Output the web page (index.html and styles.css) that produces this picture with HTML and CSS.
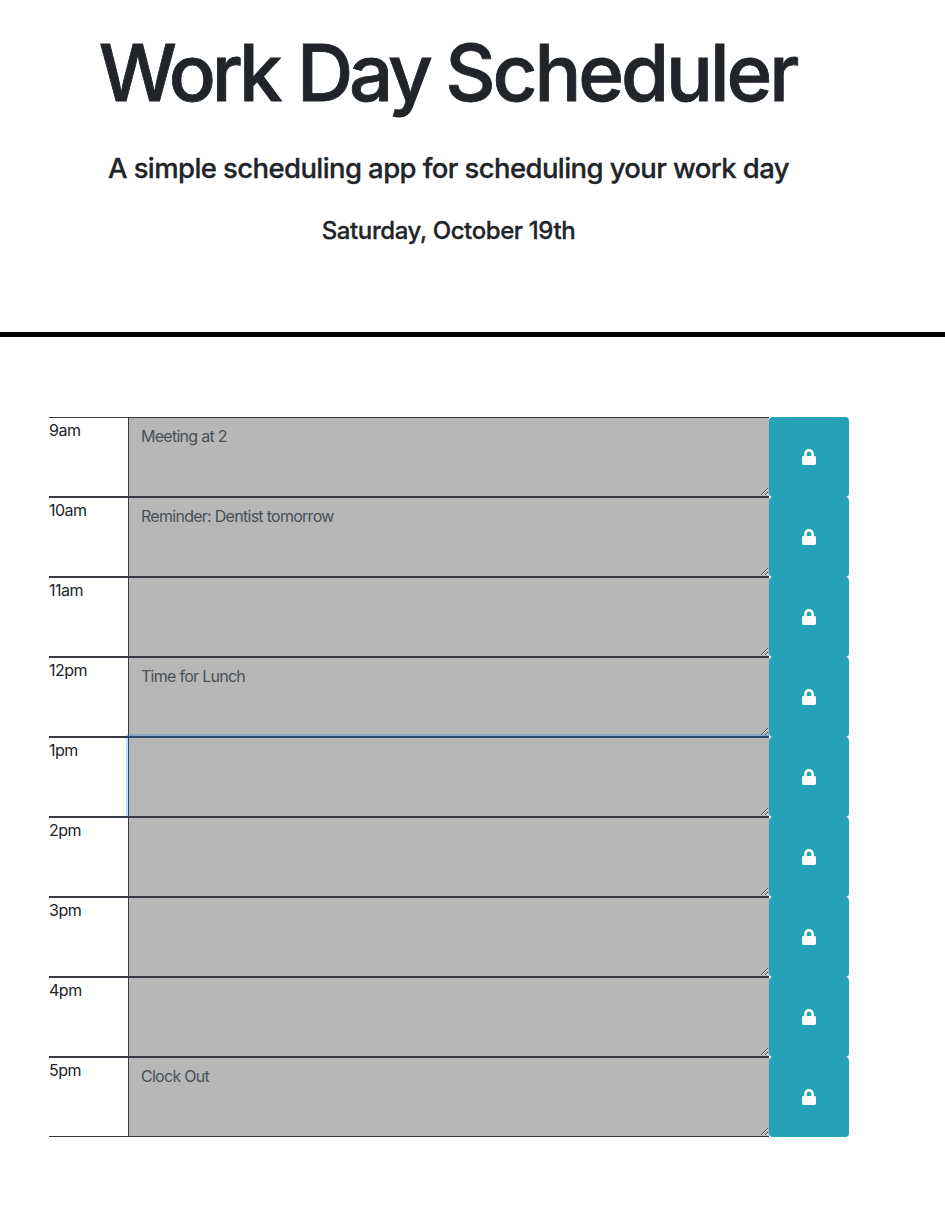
FILE: index.html
```html
<!DOCTYPE html>
<html lang="en">
<head>
<meta charset="utf-8">
<title>Work Day Scheduler</title>
<link rel="stylesheet" href="styles.css">
</head>
<body>
<header class="jumbotron">
  <h1 class="title"><span class="tight">Work Day</span> Scheduler</h1>
  <p class="lead"><span>A simple scheduling app for scheduling your work day</span></p>
  <p class="date"><span>Saturday, October 19th</span></p>
</header>
<main class="container" id="planner"></main>
<script src="script.js"></script>
</body>
</html>
```
FILE: styles.css
```css
* { box-sizing: border-box; }
body {
  margin: 0;
  background: #fff;
  color: #212529;
  font-family: Inter, "Liberation Sans", sans-serif;
  font-size: 16px;
  line-height: 24px;
}
.jumbotron {
  height: 337px;
  padding: 25px 48px 0 0;
  border-bottom: 5px solid #000;
  text-align: center;
  white-space: nowrap;
}
.title, .lead, .date { margin: 0; }
.title {
  padding-right: 2px;
  font-size: 78px;
  line-height: 96px;
  font-weight: 500;
  letter-spacing: -3.1px;
  word-spacing: -1px;
  -webkit-text-stroke: 0.8px currentColor;
}
.tight { letter-spacing: -4.2px; word-spacing: 2px; }
.lead { margin-top: 29px; font-size: 27.5px; line-height: 36px; font-weight: 500; letter-spacing: -0.6px; }
.date { margin-top: 30px; font-size: 24px; line-height: 30px; font-weight: 500; letter-spacing: -0.4px; }
.lead, .date { -webkit-text-stroke: 0.3px currentColor; }
.container { width: 800px; margin: 80px 0 0 49px; }
.time-block { display: grid; grid-template-columns: 79px 641px 80px; height: 80px; }
.hour { border: solid #343a40; border-width: 1px 0; letter-spacing: -0.5px; }
.entry {
  display: block;
  width: 641px;
  height: 80px;
  margin: 0;
  padding: 6px 12px;
  border: 1px solid #343a40;
  border-right: 0;
  border-radius: 0;
  outline: 0;
  background: #b7b7b7;
  color: #495057;
  font: inherit;
  letter-spacing: -0.72px;
  resize: vertical;
}
.active {
  border-color: #2c4b70 #343a40 #343a40 #2c4b70;
  box-shadow: 1px 0 0 3px rgba(0, 123, 255, 0.25);
  clip-path: inset(-3px 0 0 -3px);
}
.save {
  display: flex;
  align-items: center;
  justify-content: center;
  padding: 0;
  border: 0;
  border-radius: 4px;
  background: #25a2b8;
  color: #fff;
}
.lock { width: 14px; height: 16px; display: block; }
```
FILE: script.js
```js
const entries = [
  ['9am', 'Meeting at 2'], ['10am', 'Reminder: Dentist tomorrow'], ['11am', ''],
  ['12pm', 'Time for Lunch'], ['1pm', ''], ['2pm', ''], ['3pm', ''], ['4pm', ''], ['5pm', 'Clock Out']
];
document.getElementById('planner').innerHTML = entries.map(([hour, text]) => `
  <div class="time-block">
    <div class="hour"><span>${hour}</span></div>
    <textarea class="entry${hour === '1pm' ? ' active' : ''}" aria-label="${hour}">${text}</textarea>
    <button class="save" aria-label="Save"><svg class="lock" viewBox="0 0 448 512"><path fill="currentColor" d="M400 224h-24v-72C376 68.200 307.800 0 224 0S72 68.200 72 152v72H48c-26.500 0-48 21.500-48 48v192c0 26.500 21.500 48 48 48h352c26.500 0 48-21.500 48-48V272c0-26.500-21.500-48-48-48zm-104 0H152v-72c0-39.700 32.300-72 72-72s72 32.300 72 72v72z"/></svg></button>
  </div>`).join('');
```
